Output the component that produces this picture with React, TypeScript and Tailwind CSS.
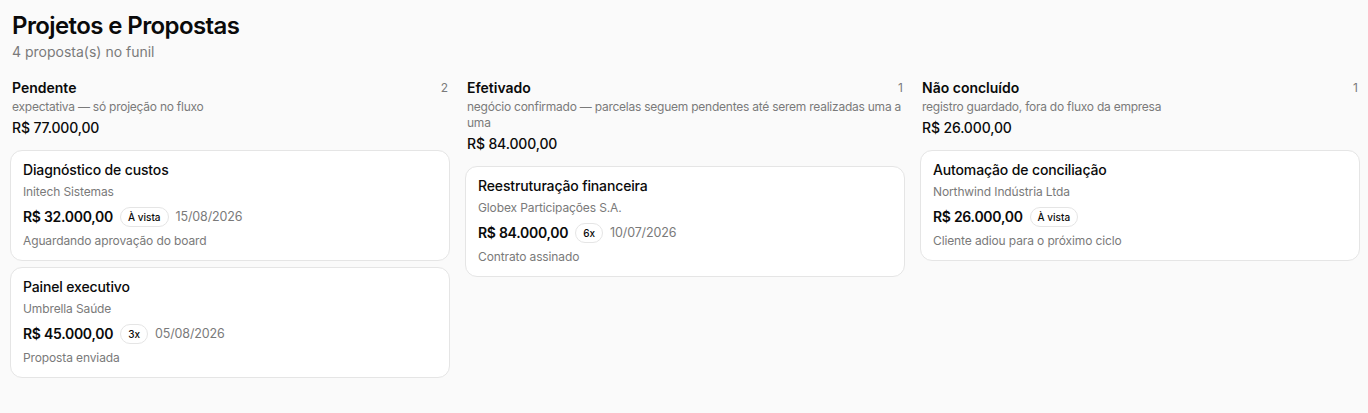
import React from "react";

type Card = {
  title: string;
  company: string;
  amount: string;
  badge: string;
  date?: string;
  note: string;
};

type Column = {
  name: string;
  count: number;
  desc: string;
  total: string;
  cards: Card[];
};

const columns: Column[] = [
  {
    name: "Pendente",
    count: 2,
    desc: "expectativa — só projeção no fluxo",
    total: "R$ 77.000,00",
    cards: [
      {
        title: "Diagnóstico de custos",
        company: "Initech Sistemas",
        amount: "R$ 32.000,00",
        badge: "À vista",
        date: "15/08/2026",
        note: "Aguardando aprovação do board",
      },
      {
        title: "Painel executivo",
        company: "Umbrella Saúde",
        amount: "R$ 45.000,00",
        badge: "3x",
        date: "05/08/2026",
        note: "Proposta enviada",
      },
    ],
  },
  {
    name: "Efetivado",
    count: 1,
    desc: "negócio confirmado — parcelas seguem pendentes até serem realizadas uma a uma",
    total: "R$ 84.000,00",
    cards: [
      {
        title: "Reestruturação financeira",
        company: "Globex Participações S.A.",
        amount: "R$ 84.000,00",
        badge: "6x",
        date: "10/07/2026",
        note: "Contrato assinado",
      },
    ],
  },
  {
    name: "Não concluído",
    count: 1,
    desc: "registro guardado, fora do fluxo da empresa",
    total: "R$ 26.000,00",
    cards: [
      {
        title: "Automação de conciliação",
        company: "Northwind Indústria Ltda",
        amount: "R$ 26.000,00",
        badge: "À vista",
        note: "Cliente adiou para o próximo ciclo",
      },
    ],
  },
];

function ProposalCard({ c }: { c: Card }) {
  return (
    <div className="rounded-xl border border-[#e5e5e5] bg-white pl-[12px] pr-3 pt-[9px] pb-[11px] flex flex-col">
      <div className="text-[14px] leading-5 font-medium tracking-[-0.01em] text-[#0a0a0a]">{c.title}</div>
      <div className="mt-[4px] text-[12px] leading-4 tracking-[-0.01em] text-[#7a7a7a]">{c.company}</div>
      <div className="mt-[7px] flex items-center gap-[7px] h-5">
        <span className="text-[14px] font-semibold tracking-[-0.02em] text-[#0a0a0a] leading-5">{c.amount}</span>
        <span className="rounded-full border border-[#e5e5e5] px-[7px] h-[20px] flex items-center text-[10px] font-medium text-[#0a0a0a] leading-none">
          {c.badge}
        </span>
        {c.date && <span className="text-[12.5px] tracking-[-0.01em] text-[#7a7a7a] leading-5">{c.date}</span>}
      </div>
      <div className="mt-[6px] text-[12px] leading-4 tracking-[-0.01em] text-[#7a7a7a]">{c.note}</div>
    </div>
  );
}

export default function App() {
  return (
    <div
      className="min-h-[413px] bg-[#fafafa] pl-[10px] pr-[8px] pt-[10px] text-[#0a0a0a]"
      style={{ fontFamily: "Inter, 'Noto Sans', sans-serif" }}
    >
      <div className="px-[2px]">
        <h1 className="text-[24px] leading-8 font-semibold tracking-[-0.025em]">Projetos e Propostas</h1>
        <p className="text-[14px] leading-5 text-[#7a7a7a]">4 proposta(s) no funil</p>
      </div>
      <div className="mt-4 grid grid-cols-3 gap-[15px] items-start">
        {columns.map((col) => (
          <div key={col.name} className="flex flex-col">
            <div className="px-[2px]">
              <div className="flex items-center justify-between">
                <span className="text-[14px] leading-5 font-semibold">{col.name}</span>
                <span className="text-[12px] leading-5 text-[#7a7a7a]">{col.count}</span>
              </div>
              <div className="mt-[1px] text-[12px] leading-4 tracking-[-0.02em] text-[#7a7a7a]">{col.desc}</div>
              <div className="mt-[3px] text-[14px] leading-5 font-medium tracking-[-0.01em]">{col.total}</div>
            </div>
            <div className="mt-3 flex flex-col gap-[6px]">
              {col.cards.map((c) => (
                <ProposalCard key={c.title} c={c} />
              ))}
            </div>
          </div>
        ))}
      </div>
    </div>
  );
}
